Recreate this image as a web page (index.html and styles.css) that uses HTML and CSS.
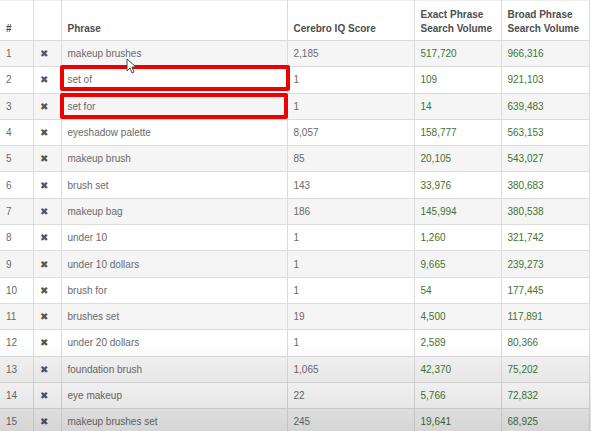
FILE: index.html
```html
<!DOCTYPE html>
<html>
<head>
<meta charset="utf-8">
<link rel="stylesheet" href="styles.css">
</head>
<body>
<div class="wrap">
<table class="kw">
<colgroup><col class="c-num"><col class="c-x"><col class="c-ph"><col class="c-iq"><col class="c-ex"><col class="c-br"></colgroup>
<thead>
<tr><th>#</th><th></th><th>Phrase</th><th>Cerebro IQ Score</th><th>Exact Phrase<br>Search Volume</th><th>Broad Phrase<br>Search Volume</th></tr>
</thead>
<tbody>
<tr><td>1</td><td class="x">✖</td><td>makeup brushes</td><td>2,185</td><td class="g">517,720</td><td class="g">966,316</td></tr>
<tr><td>2</td><td class="x">✖</td><td>set of</td><td>1</td><td class="g">109</td><td class="g">921,103</td></tr>
<tr><td>3</td><td class="x">✖</td><td>set for</td><td>1</td><td class="g">14</td><td class="g">639,483</td></tr>
<tr><td>4</td><td class="x">✖</td><td>eyeshadow palette</td><td>8,057</td><td class="g">158,777</td><td class="g">563,153</td></tr>
<tr><td>5</td><td class="x">✖</td><td>makeup brush</td><td>85</td><td class="g">20,105</td><td class="g">543,027</td></tr>
<tr><td>6</td><td class="x">✖</td><td>brush set</td><td>143</td><td class="g">33,976</td><td class="g">380,683</td></tr>
<tr><td>7</td><td class="x">✖</td><td>makeup bag</td><td>186</td><td class="g">145,994</td><td class="g">380,538</td></tr>
<tr><td>8</td><td class="x">✖</td><td>under 10</td><td>1</td><td class="g">1,260</td><td class="g">321,742</td></tr>
<tr><td>9</td><td class="x">✖</td><td>under 10 dollars</td><td>1</td><td class="g">9,665</td><td class="g">239,273</td></tr>
<tr><td>10</td><td class="x">✖</td><td>brush for</td><td>1</td><td class="g">54</td><td class="g">177,445</td></tr>
<tr><td>11</td><td class="x">✖</td><td>brushes set</td><td>19</td><td class="g">4,500</td><td class="g">117,891</td></tr>
<tr><td>12</td><td class="x">✖</td><td>under 20 dollars</td><td>1</td><td class="g">2,589</td><td class="g">80,366</td></tr>
<tr><td>13</td><td class="x">✖</td><td>foundation brush</td><td>1,065</td><td class="g">42,370</td><td class="g">75,202</td></tr>
<tr><td>14</td><td class="x">✖</td><td>eye makeup</td><td>22</td><td class="g">5,766</td><td class="g">72,832</td></tr>
<tr><td>15</td><td class="x">✖</td><td>makeup brushes set</td><td>245</td><td class="g">19,641</td><td class="g">68,925</td></tr>
</tbody>
</table>
<div class="hl hl1"></div>
<div class="hl hl2"></div>
<svg class="cursor" width="10" height="16" viewBox="0 0 10 16"><path d="M1 1 L1 13 L4 10 L6 15 L8 14 L6 9 L10 9 Z" fill="#fff" stroke="#444" stroke-width="1"/></svg>
<div class="shade"></div>
</div>
</body>
</html>
```
FILE: styles.css
```css
html, body { margin: 0; padding: 0; background: #fff; }
body { font-family: "Liberation Sans", Arial, sans-serif; }
.wrap { position: relative; width: 591px; height: 431px; overflow: hidden; }
.kw { border-collapse: collapse; table-layout: fixed; width: 589px; font-size: 10px; color: #6a6a6a; }
.c-num { width: 33px; } .c-x { width: 28px; } .c-ph { width: 226px; } .c-iq { width: 127px; } .c-ex { width: 87px; } .c-br { width: 88px; }
.kw th, .kw td { border: 1px solid #dcdcdc; padding: 0 6px; text-align: left; white-space: nowrap; }
.kw tr > :first-child { border-left: none; }
.kw th { height: 40px; vertical-align: bottom; padding-bottom: 4px; font-weight: bold; color: #4d4d4d; line-height: 14px; box-sizing: border-box; border-top-color: #eee; }
.kw td { height: 26.3px; box-sizing: border-box; }
.kw tbody tr:nth-child(odd) td { background: #f5f5f5; }
.kw td.g { color: #3f7431; }
.kw td.x { color: #555; font-size: 10px; padding-left: 6px; }
.hl { position: absolute; border: 4px solid #ee0000; box-sizing: border-box; border-radius: 2px; }
.hl1 { left: 60px; top: 65px; width: 230px; height: 26px; }
.hl2 { left: 60px; top: 93px; width: 228px; height: 26px; }
.cursor { position: absolute; left: 126px; top: 58px; }
.shade { position: absolute; left: 0; right: 0; bottom: 0; height: 90px; background: linear-gradient(to bottom, rgba(0,0,0,0), rgba(0,0,0,0.13)); pointer-events: none; }
```
